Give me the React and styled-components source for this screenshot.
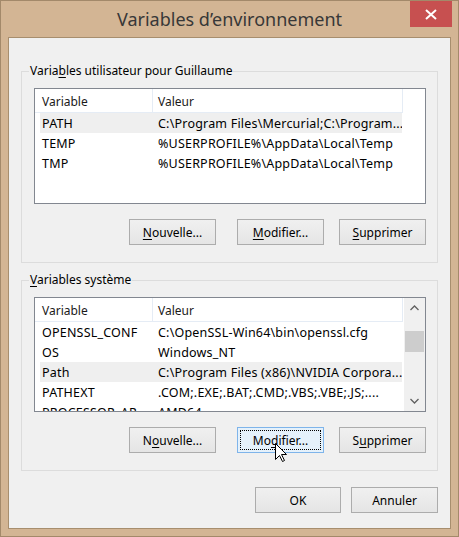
import React from "react";
import styled, { createGlobalStyle, css } from "styled-components";

const GlobalStyle = createGlobalStyle`
  html, body { margin: 0; padding: 0; background: #ffffff; }
  body { font-family: "Noto Sans", "Open Sans", sans-serif; font-size: 12px; color: #000; }
  * { box-sizing: border-box; }
`;

const Window = styled.div`
  position: relative;
  width: 459px;
  height: 537px;
  border: 1px solid #a3896a;
  background: #d3b594;
  display: flex;
  flex-direction: column;
`;

const TitleBar = styled.div`
  height: 36px;
  flex: none;
  display: grid;
  grid-template-columns: 1fr auto 1fr;
`;

const Title = styled.div`
  grid-column: 2;
  font-size: 18px;
  line-height: 37px;
  color: #383838;
  white-space: nowrap;
`;

const CloseButton = styled.div`
  grid-column: 3;
  justify-self: end;
  align-self: start;
  width: 42px;
  height: 26px;
  margin-right: 6px;
  background: #c75050;
  display: flex;
  align-items: center;
  justify-content: center;
`;

const Client = styled.div`
  flex: 1;
  margin: 0 7px 7px 7px;
  border: 1px solid #a78e6e;
  background: #f0f0f0;
  padding: 25px 12px 0 12px;
  display: flex;
  flex-direction: column;
`;

const Group = styled.fieldset`
  margin: ${(p) => (p.$first ? "0" : "9px 0 0 0")};
  min-width: 0;
  border: 1px solid #dcdcdc;
  padding: 9px 11px 17px 12px;
`;

const Legend = styled.legend`
  margin-left: -5px;
  padding: 0 1px;
  font-size: 12px;
  line-height: 16px;
  color: #000;
`;

const Key = styled.u`
  text-decoration: underline;
  text-underline-offset: 2px;
`;

const ListBox = styled.div`
  height: ${(p) => p.$height}px;
  border: 1px solid #828790;
  background: #fff;
  display: flex;
  overflow: hidden;
`;

const ListContent = styled.div`
  flex: 1;
  min-width: 0;
  overflow: hidden;
`;

const HeaderRow = styled.div`
  display: flex;
  height: 24px;
`;

const HeaderCell = styled.div`
  width: ${(p) => p.$width}px;
  flex: none;
  padding-left: ${(p) => p.$pad}px;
  padding-top: 2px;
  line-height: 21px;
  border-right: 1px solid #e5ecf5;
  border-bottom: 1px solid #e5ecf5;
  color: #1a1a1a;
  white-space: nowrap;
`;

const Row = styled.div`
  display: flex;
  width: 362px;
  height: 20px;
  margin-left: 5px;
  line-height: 22px;
  font-size: 12.5px;
  letter-spacing: 0.2px;
  background: ${(p) => (p.$selected ? "#efefef" : "transparent")};
`;

const Cell = styled.div`
  width: ${(p) => p.$width}px;
  height: 20px;
  flex: none;
  padding-left: ${(p) => p.$pad}px;
  white-space: nowrap;
  overflow: hidden;
`;

const ScrollBar = styled.div`
  width: 21px;
  flex: none;
  background: #f0f0f0;
  display: flex;
  flex-direction: column;
`;

const ScrollArrow = styled.div`
  height: 20px;
  flex: none;
  display: flex;
  align-items: center;
  justify-content: center;
`;

const ScrollTrack = styled.div`
  flex: 1;
  display: flex;
  flex-direction: column;
  align-items: center;
`;

const Thumb = styled.div`
  width: 19px;
  height: 21px;
  background: #cdcdcd;
`;

const ButtonRow = styled.div`
  display: flex;
  justify-content: flex-end;
  margin-top: ${(p) => p.$top}px;
`;

const Button = styled.div`
  position: relative;
  width: ${(p) => p.$width || 87}px;
  height: 26px;
  margin-left: ${(p) => p.$gap || 0}px;
  border: 1px solid #acacac;
  background: linear-gradient(#f0f0f0, #e5e5e5);
  display: flex;
  align-items: center;
  justify-content: center;
  font-size: 12px;
  color: #000;
  white-space: nowrap;
  ${(p) =>
    p.$focused &&
    css`
      border-color: #7eb4ea;
      background: #e5f1fb;
      outline: 1px dotted #000;
      outline-offset: -4px;
    `}
`;

const Cursor = styled.svg`
  position: absolute;
  left: 273px;
  top: 442px;
  pointer-events: none;
`;

const userVars = [
  ["PATH", "C:\\Program Files\\Mercurial;C:\\Program...", true],
  ["TEMP", "%USERPROFILE%\\AppData\\Local\\Temp", false],
  ["TMP", "%USERPROFILE%\\AppData\\Local\\Temp", false],
];

const sysVars = [
  ["OPENSSL_CONF", "C:\\OpenSSL-Win64\\bin\\openssl.cfg", false],
  ["OS", "Windows_NT", false],
  ["Path", "C:\\Program Files (x86)\\NVIDIA Corpora...", true],
  ["PATHEXT", ".COM;.EXE;.BAT;.CMD;.VBS;.VBE;.JS;....", false],
  ["PROCESSOR_AR...", "AMD64", false],
];

function VarList({ rows, height, scroll }) {
  return (
    <ListBox $height={height}>
      <ListContent>
        <HeaderRow>
          <HeaderCell $width={118} $pad={7}>Variable</HeaderCell>
          <HeaderCell $width={250} $pad={5}>Valeur</HeaderCell>
        </HeaderRow>
        {rows.map(([name, value, sel]) => (
          <Row key={name} $selected={sel}>
            <Cell $width={113} $pad={2}>{name}</Cell>
            <Cell $width={249} $pad={5}>{value}</Cell>
          </Row>
        ))}
      </ListContent>
      {scroll && (
        <ScrollBar>
          <ScrollArrow>
            <svg width="9" height="6" viewBox="0 0 9 6">
              <polyline points="0.5,5 4.5,1 8.5,5" fill="none" stroke="#606060" strokeWidth="1.3" />
            </svg>
          </ScrollArrow>
          <ScrollTrack>
            <Thumb style={{ marginTop: 13 }} />
          </ScrollTrack>
          <ScrollArrow>
            <svg width="9" height="6" viewBox="0 0 9 6">
              <polyline points="0.5,1 4.5,5 8.5,1" fill="none" stroke="#606060" strokeWidth="1.3" />
            </svg>
          </ScrollArrow>
        </ScrollBar>
      )}
    </ListBox>
  );
}

export default function App() {
  return (
    <>
      <GlobalStyle />
      <Window>
        <TitleBar>
          <Title>Variables d’environnement</Title>
          <CloseButton>
            <svg width="12" height="11" viewBox="0 0 12 11">
              <line x1="1" y1="1" x2="11" y2="10" stroke="#fff" strokeWidth="2" />
              <line x1="11" y1="1" x2="1" y2="10" stroke="#fff" strokeWidth="2" />
            </svg>
          </CloseButton>
        </TitleBar>
        <Client>
          <Group $first>
            <Legend>
              Varia<Key>b</Key>les utilisateur pour Guillaume
            </Legend>
            <VarList rows={userVars} height={116} />
            <ButtonRow $top={15}>
              <Button><span><Key>N</Key>ouvelle...</span></Button>
              <Button $gap={21}><span><Key>M</Key>odifier...</span></Button>
              <Button $gap={15}><span><Key>S</Key>upprimer</span></Button>
            </ButtonRow>
          </Group>
          <Group>
            <Legend>
              <Key>V</Key>ariables système
            </Legend>
            <VarList rows={sysVars} height={115} scroll />
            <ButtonRow $top={15}>
              <Button><span>N<Key>o</Key>uvelle...</span></Button>
              <Button $gap={21} $focused><span>Mo<Key>d</Key>ifier...</span></Button>
              <Button $gap={15}><span>S<Key>u</Key>pprimer</span></Button>
            </ButtonRow>
          </Group>
          <ButtonRow $top={16}>
            <Button $width={86}>OK</Button>
            <Button $gap={10}>Annuler</Button>
          </ButtonRow>
        </Client>
        <Cursor width="13" height="20" viewBox="0 0 13 20">
          <path d="M1.5 0.5 L1.5 16.5 L5.5 12.5 L8.5 18.5 L10.5 17.5 L7.5 11.5 L12.5 11.5 Z" fill="#fff" stroke="#000" strokeWidth="1" strokeLinejoin="miter" />
        </Cursor>
      </Window>
    </>
  );
}
